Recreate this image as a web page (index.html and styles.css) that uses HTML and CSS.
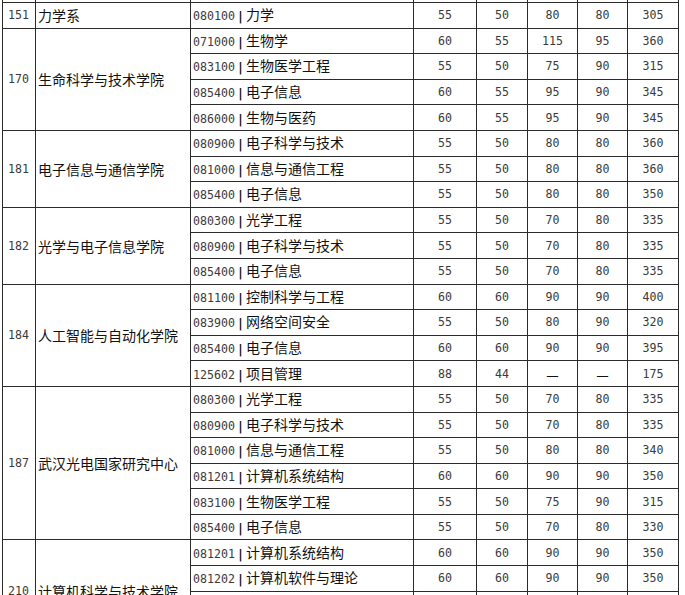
FILE: index.html
```html
<!DOCTYPE html>
<html lang="zh-CN">
<head>
<meta charset="utf-8">
<title>分数线</title>
<link rel="stylesheet" href="styles.css">
</head>
<body>
<table class="grid">
  <colgroup>
    <col class="c-id"><col class="c-dept"><col class="c-major">
    <col class="c-s1"><col class="c-s2"><col class="c-s3"><col class="c-s4"><col class="c-tot">
  </colgroup>
  <tbody>
    <tr class="stub"><td></td><td></td><td></td><td></td><td></td><td></td><td></td><td></td></tr>

    <tr><td class="id">151</td><td class="dept">力学系</td><td class="major">080100<span class="bar">|</span><span class="zh">力学</span></td><td>55</td><td>50</td><td>80</td><td>80</td><td>305</td></tr>

    <tr><td class="id" rowspan="4">170</td><td class="dept" rowspan="4">生命科学与技术学院</td><td class="major">071000<span class="bar">|</span><span class="zh">生物学</span></td><td>60</td><td>55</td><td>115</td><td>95</td><td>360</td></tr>
    <tr><td class="major">083100<span class="bar">|</span><span class="zh">生物医学工程</span></td><td>55</td><td>50</td><td>75</td><td>90</td><td>315</td></tr>
    <tr><td class="major">085400<span class="bar">|</span><span class="zh">电子信息</span></td><td>60</td><td>55</td><td>95</td><td>90</td><td>345</td></tr>
    <tr><td class="major">086000<span class="bar">|</span><span class="zh">生物与医药</span></td><td>60</td><td>55</td><td>95</td><td>90</td><td>345</td></tr>

    <tr><td class="id" rowspan="3">181</td><td class="dept" rowspan="3">电子信息与通信学院</td><td class="major">080900<span class="bar">|</span><span class="zh">电子科学与技术</span></td><td>55</td><td>50</td><td>80</td><td>80</td><td>360</td></tr>
    <tr><td class="major">081000<span class="bar">|</span><span class="zh">信息与通信工程</span></td><td>55</td><td>50</td><td>80</td><td>80</td><td>360</td></tr>
    <tr><td class="major">085400<span class="bar">|</span><span class="zh">电子信息</span></td><td>55</td><td>50</td><td>80</td><td>80</td><td>350</td></tr>

    <tr><td class="id" rowspan="3">182</td><td class="dept" rowspan="3">光学与电子信息学院</td><td class="major">080300<span class="bar">|</span><span class="zh">光学工程</span></td><td>55</td><td>50</td><td>70</td><td>80</td><td>335</td></tr>
    <tr><td class="major">080900<span class="bar">|</span><span class="zh">电子科学与技术</span></td><td>55</td><td>50</td><td>70</td><td>80</td><td>335</td></tr>
    <tr><td class="major">085400<span class="bar">|</span><span class="zh">电子信息</span></td><td>55</td><td>50</td><td>70</td><td>80</td><td>335</td></tr>

    <tr><td class="id" rowspan="4">184</td><td class="dept" rowspan="4">人工智能与自动化学院</td><td class="major">081100<span class="bar">|</span><span class="zh">控制科学与工程</span></td><td>60</td><td>60</td><td>90</td><td>90</td><td>400</td></tr>
    <tr><td class="major">083900<span class="bar">|</span><span class="zh">网络空间安全</span></td><td>55</td><td>50</td><td>80</td><td>90</td><td>320</td></tr>
    <tr><td class="major">085400<span class="bar">|</span><span class="zh">电子信息</span></td><td>60</td><td>60</td><td>90</td><td>90</td><td>395</td></tr>
    <tr><td class="major">125602<span class="bar">|</span><span class="zh">项目管理</span></td><td>88</td><td>44</td><td class="zh">—</td><td class="zh">—</td><td>175</td></tr>

    <tr><td class="id" rowspan="6">187</td><td class="dept" rowspan="6">武汉光电国家研究中心</td><td class="major">080300<span class="bar">|</span><span class="zh">光学工程</span></td><td>55</td><td>50</td><td>70</td><td>80</td><td>335</td></tr>
    <tr><td class="major">080900<span class="bar">|</span><span class="zh">电子科学与技术</span></td><td>55</td><td>50</td><td>70</td><td>80</td><td>335</td></tr>
    <tr><td class="major">081000<span class="bar">|</span><span class="zh">信息与通信工程</span></td><td>55</td><td>50</td><td>80</td><td>80</td><td>340</td></tr>
    <tr><td class="major">081201<span class="bar">|</span><span class="zh">计算机系统结构</span></td><td>60</td><td>60</td><td>90</td><td>90</td><td>350</td></tr>
    <tr><td class="major">083100<span class="bar">|</span><span class="zh">生物医学工程</span></td><td>55</td><td>50</td><td>75</td><td>90</td><td>315</td></tr>
    <tr><td class="major">085400<span class="bar">|</span><span class="zh">电子信息</span></td><td>55</td><td>50</td><td>70</td><td>80</td><td>330</td></tr>

    <tr><td class="id" rowspan="4">210</td><td class="dept" rowspan="4">计算机科学与技术学院</td><td class="major">081201<span class="bar">|</span><span class="zh">计算机系统结构</span></td><td>60</td><td>60</td><td>90</td><td>90</td><td>350</td></tr>
    <tr><td class="major">081202<span class="bar">|</span><span class="zh">计算机软件与理论</span></td><td>60</td><td>60</td><td>90</td><td>90</td><td>350</td></tr>
    <tr><td class="major">081203<span class="bar">|</span><span class="zh">计算机应用技术</span></td><td>60</td><td>60</td><td>90</td><td>90</td><td>350</td></tr>
    <tr><td class="major">085400<span class="bar">|</span><span class="zh">电子信息</span></td><td>60</td><td>60</td><td>90</td><td>90</td><td>350</td></tr>
  </tbody>
</table>
</body>
</html>
```

FILE: styles.css
```css
html, body {
  margin: 0;
  padding: 0;
  background: #fff;
}

.grid {
  margin-left: 2px;
  border-collapse: collapse;
  table-layout: fixed;
  width: 677px;
  font-family: "DejaVu Sans Mono", "Noto Sans CJK SC", monospace;
  font-size: 11.6px;
  line-height: 16px;
  color: #3a3a3a;
}

.c-id { width: 33px; }
.c-dept { width: 155px; }
.c-major { width: 223px; }
.c-s1 { width: 63px; }
.c-s2 { width: 51px; }
.c-s3 { width: 50px; }
.c-s4 { width: 50px; }
.c-tot { width: 51px; }

.grid tr {
  height: 25.6px;
}

.grid td {
  border: 1px solid #2b2b2b;
  padding: 0;
  text-align: center;
  vertical-align: middle;
  white-space: nowrap;
  overflow: hidden;
}

.grid tr.stub {
  height: 2px;
}

.grid tr.stub td {
  border-top: none;
  height: 2px;
}

.grid td.id {
  text-align: left;
  padding-left: 5px;
}

.grid td.dept {
  text-align: left;
  padding-left: 2px;
  font-family: "Noto Sans CJK SC", sans-serif;
  font-size: 14px;
  color: #111;
}

.grid td.major {
  text-align: left;
  padding-left: 2px;
}

.bar {
  display: inline-block;
  width: 11px;
  text-align: center;
  font-weight: bold;
  color: #111;
}

.zh {
  font-family: "Noto Sans CJK SC", sans-serif;
  font-size: 14px;
  color: #111;
}
```
